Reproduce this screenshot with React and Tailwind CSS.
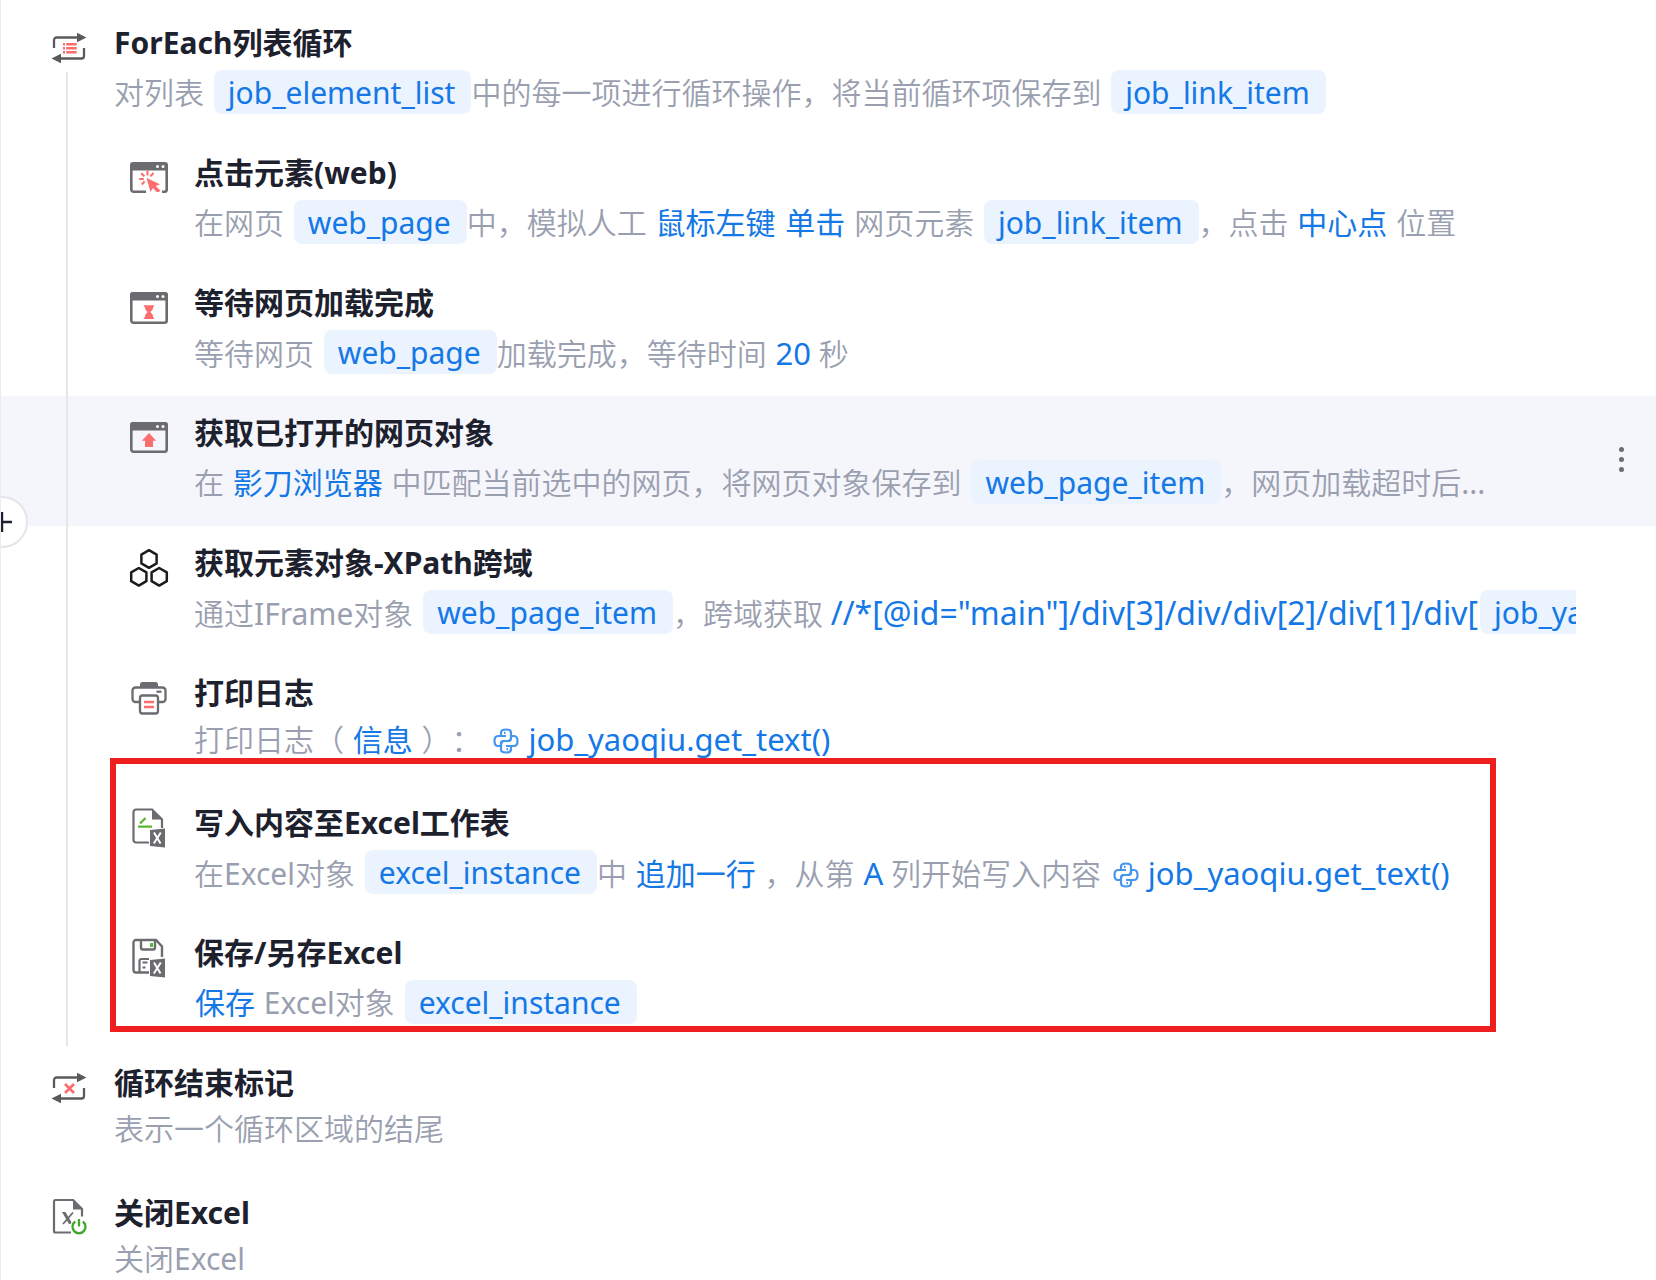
const GRAY = '#6b6b70';
const RED = '#fa6e6e';
const GREEN = '#5cb531';

function Icon({ children }) {
  return (
    <svg viewBox="0 0 40 40" className="w-10 h-10 shrink-0" fill="none" aria-hidden="true">
      {children}
    </svg>
  );
}

function LoopArrows() {
  return (
    <>
      <path d="M5 20v-8a2.500 2.500 0 0 1 2.500-2.500H29M35 20v8a2.500 2.500 0 0 1-2.500 2.500H11" stroke="#5a5a5c" strokeWidth="2.300" />
      <path d="M28 4.800l9.500 4.700L28 14.200zM12 25.800l-9.500 4.700 9.500 4.700z" fill="#5a5a5c" />
    </>
  );
}

function LoopIcon() {
  return (
    <Icon>
      <LoopArrows />
      <path d="M14 16.200h2M14 20.200h2M14 24.200h2M17.200 16.200h10.500M17.200 20.200h10.500M17.200 24.200h10.500" stroke={RED} strokeWidth="2.600" />
    </Icon>
  );
}

function LoopEndIcon() {
  return (
    <Icon>
      <LoopArrows />
      <path d="M16 16l9 9M25 16l-9 9" stroke={RED} strokeWidth="2.700" />
    </Icon>
  );
}

function WindowHead() {
  return (
    <>
      <path d="M1 12.500V7a3 3 0 0 1 3-3h32a3 3 0 0 1 3 3v5.500z" fill={GRAY} />
      <circle cx="28.500" cy="8.500" r="1.500" fill="#fff" />
      <circle cx="34" cy="8.500" r="1.500" fill="#fff" />
    </>
  );
}

function ClickIcon() {
  return (
    <Icon>
      <path d="M17 33.700H4.500a2.200 2.200 0 0 1-2.200-2.200V10M37.700 10v21.500a2.200 2.200 0 0 1-2.200 2.200H33" stroke={GRAY} strokeWidth="2.600" />
      <WindowHead />
      <path d="M17.500 20l13.500 6.200-4.200 1.800 4.700 4.700-2 1.300h-2l-3.500-4-2.500 4z" fill={RED} />
      <path d="M18.500 12.500v5M24.500 15l-3.200 3.400M12.200 15.200l3.200 3M10.200 21h4.600M12.800 26.500l2.800-3" stroke={RED} strokeWidth="2.100" />
    </Icon>
  );
}

function WaitIcon() {
  return (
    <Icon>
      <rect x="2.300" y="5.300" width="35.400" height="29.400" rx="2.200" stroke={GRAY} strokeWidth="2.600" />
      <WindowHead />
      <path d="M14.800 17.200h10.400v1.600h-1c0 3-1.500 4-2.900 5.300 1.400 1.300 2.900 2.600 2.900 5.300h1V31H14.800v-1.600h1c0-2.700 1.500-4 2.900-5.300-1.400-1.300-2.900-2.300-2.900-5.300h-1z" fill={RED} />
    </Icon>
  );
}

function OpenPageIcon() {
  return (
    <Icon>
      <rect x="2.300" y="5.300" width="35.400" height="28.400" rx="2.200" stroke={GRAY} strokeWidth="2.600" />
      <WindowHead />
      <path d="M20 15l7.200 7.800h-3.200V29h-8v-6.200h-3.200z" fill={RED} />
    </Icon>
  );
}

function HexIcon() {
  return (
    <Icon>
      <path
        d="M20 2.200l7.600 4.400v8.800L20 19.800l-7.600-4.400V6.600zM9.800 20l7.600 4.400v8.800l-7.600 4.400-7.600-4.400v-8.800zM30.200 20l7.600 4.400v8.800l-7.600 4.400-7.600-4.400v-8.800z"
        stroke="#1c1c1c"
        strokeWidth="2.500"
        strokeLinejoin="round"
      />
    </Icon>
  );
}

function PrintIcon() {
  return (
    <Icon>
      <path d="M11 10V6.500A2.500 2.500 0 0 1 13.500 4h13A2.500 2.500 0 0 1 29 6.500V10z" fill={GRAY} />
      <path d="M10.500 24H6.500a3 3 0 0 1-3-3v-8.500a3 3 0 0 1 3-3h27a3 3 0 0 1 3 3V21a3 3 0 0 1-3 3h-4" stroke={GRAY} strokeWidth="2.300" />
      <path d="M27.500 13.700h5" stroke={GRAY} strokeWidth="2.200" />
      <rect x="11" y="17.500" width="18" height="18" rx="2.500" stroke={GRAY} strokeWidth="2.300" />
      <path d="M15 24h10M15 29h10" stroke={RED} strokeWidth="2.400" />
    </Icon>
  );
}

function ExcelBadge() {
  return (
    <>
      <path d="M21 22l15-1.500v19L21 38z" fill={GRAY} />
      <path d="M25 24.500l6.500 11M31.800 24.500l-7 11" stroke="#fff" strokeWidth="2" />
    </>
  );
}

function WriteExcelIcon() {
  return (
    <Icon>
      <path d="M20 34.500H7A2.500 2.500 0 0 1 4.500 32V4A2.500 2.500 0 0 1 7 1.500h16l10 10V20" stroke={GRAY} strokeWidth="2.200" />
      <path d="M23 .5l11 11H23z" fill={GRAY} />
      <path d="M9 18.700h14M11 15.500l5.500-5.500" stroke={GREEN} strokeWidth="2.300" />
      <ExcelBadge />
    </Icon>
  );
}

function SaveExcelIcon() {
  return (
    <Icon>
      <path d="M20 34.500H7A2.500 2.500 0 0 1 4.500 32V4.500A2.500 2.500 0 0 1 7 2h20l6 6.500V19" stroke={GRAY} strokeWidth="2.400" />
      <path d="M12 2v7.500a2 2 0 0 0 2 2h10a2 2 0 0 0 2-2V2" stroke={GRAY} strokeWidth="2.400" />
      <rect x="21" y="5" width="3" height="4" fill={GREEN} />
      <path d="M10.500 34V23a2 2 0 0 1 2-2H20M13.500 24.500h5M13.500 29.500h3" stroke={GRAY} strokeWidth="2.200" />
      <ExcelBadge />
    </Icon>
  );
}

function CloseExcelIcon() {
  return (
    <Icon>
      <path d="M22 34.500H6.500A1.500 1.500 0 0 1 5 33V3.500A1.500 1.500 0 0 1 6.500 2H24l9 9v7.500" stroke={GRAY} strokeWidth="2.200" />
      <path d="M24 1l10 10.500H24z" fill={GRAY} />
      <path d="M13 14h3.500l7 12H20z" fill={GRAY} />
      <path d="M24 14.500L14 26" stroke={GRAY} strokeWidth="1.800" />
      <circle cx="30" cy="29" r="9" fill="#fff" />
      <path d="M26.200 23.500a6.500 6.500 0 1 0 7.600 0M30 21v7.500" stroke="#41a82c" strokeWidth="2.300" />
    </Icon>
  );
}

function PythonIcon() {
  return (
    <svg viewBox="0 0 26 26" className="inline-block w-[26px] h-[26px] ml-1 mr-2 align-[-3px]" fill="none" stroke="#4596ee" strokeWidth="2.200" aria-hidden="true">
      <path d="M8 8V4.500C8 2 10 1.500 13 1.500s5 .5 5 3V10a3 3 0 0 1-3 3h-4a3 3 0 0 0-3 3v2H5c-2.500 0-3.500-2-3.500-5S2.500 8 5 8h8" />
      <path d="M18 18v3.500c0 2.500-2 3-5 3s-5-.5-5-3V16a3 3 0 0 1 3-3h4a3 3 0 0 0 3-3V8h3c2.500 0 3.500 2 3.500 5s-1 5-3.500 5h-8" />
      <path d="M11 4.800h1.500M13.500 21.200H15" />
    </svg>
  );
}

function Tag({ children }) {
  return <span className="inline-block h-11 leading-[46px] ml-[2px] pl-[14px] pr-4 rounded-lg bg-[#eaf3fe] text-[30px] font-normal text-[#1478e6] align-top">{children}</span>;
}

function Param({ children }) {
  return <span className="mx-px font-normal text-[#1478e6]">{children}</span>;
}

function Code({ children }) {
  return <span className="ml-px font-normal text-[31px] text-[#1478e6]">{children}</span>;
}

function XPath({ children }) {
  return <span className="font-normal text-[32px] text-[#1478e6]">{children}</span>;
}

// latin words inside the grey description
function Word({ children }) {
  return <span className="font-normal">{children}</span>;
}

function Step({ icon, title, nested, active, plain, children }) {
  return (
    <li className={`flex items-start h-[130px] pt-[22px] pr-20 gap-[25px] ${nested ? 'pl-32' : 'pl-12'} ${active ? 'bg-[#f5f6fb]' : ''}`}>
      {icon}
      <div className="flex-1 min-w-0 -mt-2">
        <h3 className="text-[30px] leading-[46px] font-bold text-[#1d212e]">{title}</h3>
        <p className={`overflow-hidden whitespace-pre text-[30px] leading-[46px] font-[350] text-[#9a9fb0] ${plain ? '' : 'mt-1'}`}>{children}</p>
      </div>
      {active && (
        <button type="button" aria-label="更多" className="self-center -mr-[70px] -mt-[26px] w-[50px] h-10 flex flex-col items-center justify-center gap-[5px]">
          <span className="w-[5px] h-[5px] rounded-full bg-[#6b6d75]" />
          <span className="w-[5px] h-[5px] rounded-full bg-[#6b6d75]" />
          <span className="w-[5px] h-[5px] rounded-full bg-[#6b6d75]" />
        </button>
      )}
    </li>
  );
}

export default function App() {
  return (
    <main className="relative overflow-hidden bg-white border-l border-[#ececee] pt-[6px] font-['Noto_Sans','Noto_Sans_CJK_SC',sans-serif] [text-spacing-trim:space-all]">
      <ol>
        <Step icon={<LoopIcon />} title="ForEach列表循环">
          对列表 <Tag>job_element_list</Tag>中的每一项进行循环操作，将当前循环项保存到 <Tag>job_link_item</Tag>
        </Step>

        {/* loop body */}
        <li className="relative">
          <ol>
            <Step nested icon={<ClickIcon />} title="点击元素(web)">
              在网页 <Tag>web_page</Tag>中，模拟人工 <Param>鼠标左键</Param> <Param>单击</Param> 网页元素 <Tag>job_link_item</Tag>，点击 <Param>中心点</Param> 位置
            </Step>
            <Step nested icon={<WaitIcon />} title="等待网页加载完成">
              等待网页 <Tag>web_page</Tag>加载完成，等待时间 <Code>20</Code> 秒
            </Step>
            <Step nested active icon={<OpenPageIcon />} title="获取已打开的网页对象">
              在 <Param>影刀浏览器</Param> 中匹配当前选中的网页，将网页对象保存到 <Tag>web_page_item</Tag>，网页加载超时后<Word>...</Word>
            </Step>
            <Step nested icon={<HexIcon />} title="获取元素对象-XPath跨域">
              通过<Word>IFrame</Word>对象 <Tag>web_page_item</Tag>，跨域获取 <XPath>{'//*[@id="main"]/div[3]/div/div[2]/div[1]/div['}</XPath><Tag>job_yaoqiu</Tag>
            </Step>
            <Step nested plain icon={<PrintIcon />} title="打印日志">
              打印日志（ <Param>信息</Param> ）： <PythonIcon /><Code>job_yaoqiu.get_text()</Code>
            </Step>
            <li className="relative">
              <ol>
                <Step nested icon={<WriteExcelIcon />} title="写入内容至Excel工作表">
                  在<Word>Excel</Word>对象 <Tag>excel_instance</Tag>中 <Param>追加一行</Param> ，从第 <Code>A</Code> 列开始写入内容 <PythonIcon /><Code>job_yaoqiu.get_text()</Code>
                </Step>
                <Step nested icon={<SaveExcelIcon />} title="保存/另存Excel">
                  <Param>保存</Param> <Word>Excel</Word>对象 <Tag>excel_instance</Tag>
                </Step>
              </ol>
              <div className="absolute -top-7 bottom-[14px] left-[109px] right-40 border-[6px] border-[#ef1f1f] pointer-events-none" />
            </li>
          </ol>
          <span className="absolute -top-16 bottom-0 left-[65px] w-[2px] bg-[#e6e7ea]" />
        </li>

        <Step plain icon={<LoopEndIcon />} title="循环结束标记">
          表示一个循环区域的结尾
        </Step>
        <Step plain icon={<CloseExcelIcon />} title="关闭Excel">
          关闭<Word>Excel</Word>
        </Step>
      </ol>

      {/* insert handle */}
      <button type="button" aria-label="添加" className="absolute top-[496px] -left-[25px] w-[52px] h-[52px] rounded-full border-2 border-[#e4e5e8] bg-white flex items-center justify-center">
        <svg viewBox="0 0 20 20" className="w-5 h-5" stroke="#1d212e" strokeWidth="2.400" aria-hidden="true">
          <path d="M0 10h20M10 0v20" />
        </svg>
      </button>
    </main>
  );
}
